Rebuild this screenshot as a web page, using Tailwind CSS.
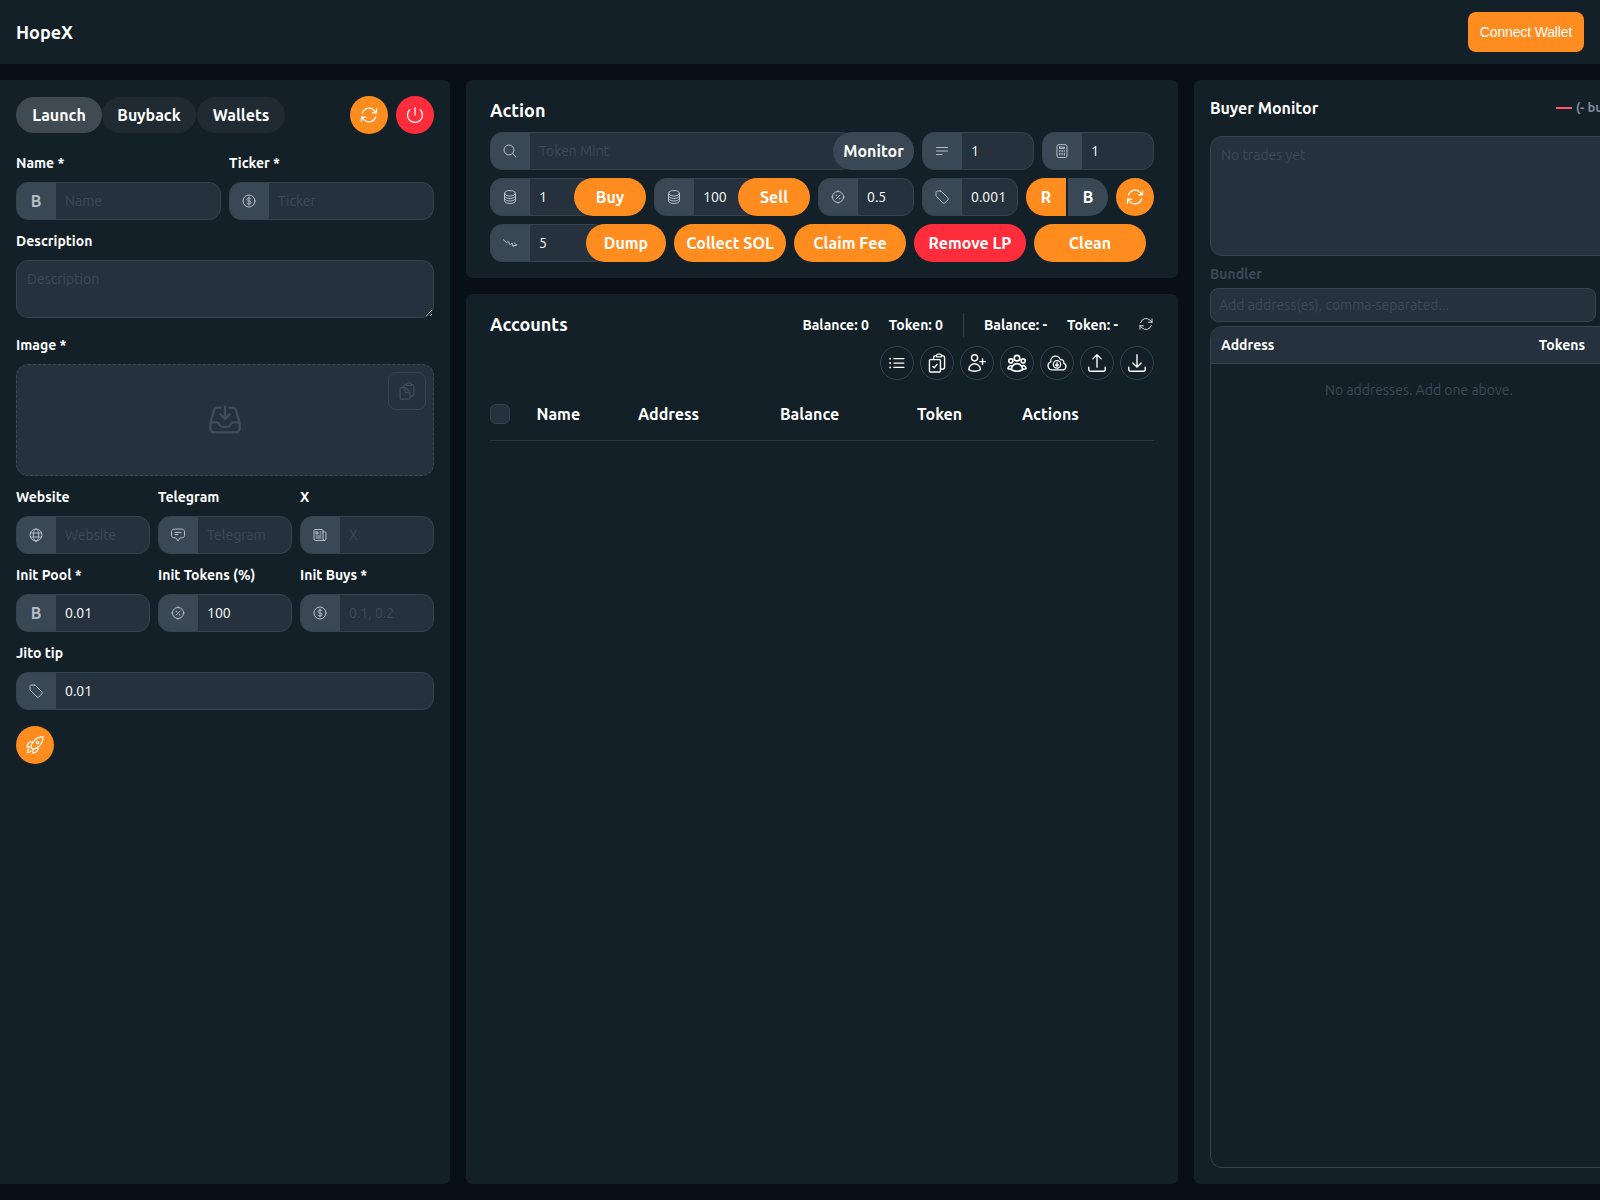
<!DOCTYPE html>
<html lang="en">
<head>
<meta charset="utf-8">
<title>HopeX</title>
<script src="https://cdn.jsdelivr.net/npm/@tailwindcss/browser@4"></script>
</head>
<body class="w-[1600px] h-[1200px] overflow-hidden bg-[#090f16] text-white font-['Ubuntu','Noto_Sans',sans-serif]">
<header class="flex h-16 items-center justify-between bg-[#132028] px-4">
  <div class="text-[18px] font-bold">HopeX</div>
  <button class="h-10 w-[116px] rounded-lg bg-[#ff8c1f] text-[14px] tracking-[-0.15px] text-white font-['Liberation_Sans',sans-serif]">Connect Wallet</button>
</header>
<main class="flex h-[1136px] w-[1644px] gap-4 pt-4 pb-4">
  <!-- LEFT -->
  <section class="flex h-full w-[450px] flex-col rounded-r-md bg-[#132028] px-4 pt-[16px]">
    <div class="flex h-[38px] items-center">
      <button class="h-9 w-[86px] rounded-full bg-[#3f4a52] text-[16px] font-semibold">Launch</button>
      <button class="h-9 w-[94px] rounded-full bg-[#1f2a33] text-[16px] font-semibold">Buyback</button>
      <button class="ml-px h-9 w-[88px] rounded-full bg-[#1f2a33] text-[16px] font-semibold">Wallets</button>
      <button class="ml-auto flex h-[38px] w-[38px] items-center justify-center rounded-full bg-[#ff8c1f]"><svg class="h-5 w-5" viewBox="0 0 24 24" fill="none" stroke="white" stroke-width="1.5"><path stroke-linecap="round" stroke-linejoin="round" d="M16.023 9.348h4.992v-.001M2.985 19.644v-4.992m0 0h4.992m-4.993 0 3.181 3.183a8.25 8.25 0 0 0 13.803-3.7M4.031 9.865a8.25 8.25 0 0 1 13.803-3.7l3.181 3.182m0-4.991v4.99"/></svg></button>
      <button class="ml-2 flex h-[38px] w-[38px] items-center justify-center rounded-full bg-[#ff2d3c]"><svg class="h-5 w-5" viewBox="0 0 24 24" fill="none" stroke="white" stroke-width="1.5"><path stroke-linecap="round" stroke-linejoin="round" d="M5.636 5.636a9 9 0 1 0 12.728 0M12 3v9"/></svg></button>
    </div>
    <div class="mt-[19px] grid grid-cols-2 gap-x-2">
      <div>
        <label class="block text-[14px] leading-5 font-semibold">Name *</label>
        <div class="mt-[9px] flex h-[38px] overflow-hidden rounded-xl border border-[#36434f] bg-[#25323d]">
          <span class="-ml-px flex w-10 shrink-0 items-center justify-center bg-[#3a4856] text-[16px] font-semibold text-[#b5bdc5]">B</span>
          <input class="min-w-0 flex-1 bg-transparent px-[9px] text-[14px] outline-none placeholder:text-[#3d4956]" placeholder="Name">
        </div>
      </div>
      <div>
        <label class="block text-[14px] leading-5 font-semibold">Ticker *</label>
        <div class="mt-[9px] flex h-[38px] overflow-hidden rounded-xl border border-[#36434f] bg-[#25323d]">
          <span class="-ml-px flex w-10 shrink-0 items-center justify-center bg-[#3a4856]"><svg class="h-4 w-4" viewBox="0 0 24 24" fill="none" stroke="#b5bdc5" stroke-width="1.5"><path stroke-linecap="round" stroke-linejoin="round" d="M12 6v12m-3-2.818.879.659c1.171.879 3.07.879 4.242 0 1.172-.879 1.172-2.303 0-3.182C13.536 12.219 12.768 12 12 12c-.725 0-1.45-.22-2.003-.659-1.106-.879-1.106-2.303 0-3.182s2.9-.879 4.006 0l.415.33M21 12a9 9 0 1 1-18 0 9 9 0 0 1 18 0Z"/></svg></span>
          <input class="min-w-0 flex-1 bg-transparent px-[9px] text-[14px] outline-none placeholder:text-[#3d4956]" placeholder="Ticker">
        </div>
      </div>
    </div>
    <label class="mt-[11px] block text-[14px] leading-5 font-semibold">Description</label>
    <textarea class="mt-[9px] block h-[58px] w-full rounded-xl border border-[#36434f] bg-[#25323d] px-[10px] py-[8px] text-[14px] leading-5 outline-none placeholder:text-[#3d4956]" placeholder="Description"></textarea>
    <label class="mt-[17px] block text-[14px] leading-5 font-semibold">Image *</label>
    <div class="relative mt-[9px] flex h-[112px] items-center justify-center rounded-xl border border-dashed border-[#3d4956] bg-[#25323d]">
      <svg class="h-9 w-9" viewBox="0 0 24 24" fill="none" stroke="#3f4c59" stroke-width="1.5"><path stroke-linecap="round" stroke-linejoin="round" d="M9 3.75H6.912a2.25 2.25 0 0 0-2.15 1.588L2.35 13.177a2.25 2.25 0 0 0-.1.661V18a2.25 2.25 0 0 0 2.25 2.25h15A2.25 2.25 0 0 0 21.75 18v-4.162c0-.224-.034-.447-.1-.661L19.24 5.338a2.25 2.25 0 0 0-2.15-1.588H15M2.25 13.5h3.86a2.25 2.25 0 0 1 2.012 1.244l.256.512a2.25 2.25 0 0 0 2.013 1.244h3.218a2.25 2.25 0 0 0 2.013-1.244l.256-.512a2.25 2.25 0 0 1 2.013-1.244h3.859M12 3v8.25m0 0-3-3m3 3 3-3"/></svg>
      <button class="absolute top-[7px] right-[7px] flex h-[38px] w-[38px] items-center justify-center rounded-lg border border-[#36434f]"><svg class="h-5 w-5" viewBox="0 0 24 24" fill="none" stroke="#3f4c59" stroke-width="1.5"><path stroke-linecap="round" stroke-linejoin="round" d="M8.25 7.5V6.108c0-1.135.845-2.098 1.976-2.192.373-.03.748-.057 1.124-.08M15.75 18H18a2.25 2.25 0 0 0 2.25-2.25V6.108c0-1.135-.845-2.098-1.976-2.192a48.424 48.424 0 0 0-1.123-.08M15.75 18.75v-1.875a3.375 3.375 0 0 0-3.375-3.375h-1.5a1.125 1.125 0 0 1-1.125-1.125v-1.5A3.375 3.375 0 0 0 6.375 7.5H5.25m11.9-3.664A2.251 2.251 0 0 0 15 2.25h-1.5a2.251 2.251 0 0 0-2.15 1.586m5.8 0c.065.21.1.433.1.664v.75h-6V4.5c0-.231.035-.454.1-.664M6.75 7.5H4.875c-.621 0-1.125.504-1.125 1.125v12c0 .621.504 1.125 1.125 1.125h9.75c.621 0 1.125-.504 1.125-1.125V16.5a9 9 0 0 0-9-9Z"/></svg></button>
    </div>
    <div class="mt-[11px] grid grid-cols-3 gap-x-2">
      <div>
        <label class="block text-[14px] leading-5 font-semibold">Website</label>
        <div class="mt-[9px] flex h-[38px] overflow-hidden rounded-xl border border-[#36434f] bg-[#25323d]">
          <span class="-ml-px flex w-10 shrink-0 items-center justify-center bg-[#3a4856]"><svg class="h-4 w-4" viewBox="0 0 24 24" fill="none" stroke="#b5bdc5" stroke-width="1.5"><path stroke-linecap="round" stroke-linejoin="round" d="M12 21a9 9 0 1 0 0-18 9 9 0 0 0 0 18Zm0 0c2.5 0 4-4 4-9s-1.5-9-4-9-4 4-4 9 1.5 9 4 9ZM3.6 9h16.8M3.6 15h16.8"/></svg></span>
          <input class="w-full min-w-0 flex-1 bg-transparent px-[9px] text-[14px] outline-none placeholder:text-[#3d4956]" placeholder="Website">
        </div>
      </div>
      <div>
        <label class="block text-[14px] leading-5 font-semibold">Telegram</label>
        <div class="mt-[9px] flex h-[38px] overflow-hidden rounded-xl border border-[#36434f] bg-[#25323d]">
          <span class="-ml-px flex w-10 shrink-0 items-center justify-center bg-[#3a4856]"><svg class="h-4 w-4" viewBox="0 0 24 24" fill="none" stroke="#b5bdc5" stroke-width="1.5"><path stroke-linecap="round" stroke-linejoin="round" d="M7.5 8.25h9m-9 3H12m-9.75 1.51c0 1.6 1.123 2.994 2.707 3.227 1.129.166 2.27.293 3.423.379.35.026.67.21.865.501L12 21l2.755-4.133a1.14 1.14 0 0 1 .865-.501 48.172 48.172 0 0 0 3.423-.379c1.584-.233 2.707-1.627 2.707-3.228V6.741c0-1.602-1.123-2.995-2.707-3.228A48.394 48.394 0 0 0 12 3c-2.392 0-4.744.175-7.043.513C3.373 3.746 2.25 5.14 2.25 6.741v6.018Z"/></svg></span>
          <input class="w-full min-w-0 flex-1 bg-transparent px-[9px] text-[14px] outline-none placeholder:text-[#3d4956]" placeholder="Telegram">
        </div>
      </div>
      <div>
        <label class="block text-[14px] leading-5 font-semibold">X</label>
        <div class="mt-[9px] flex h-[38px] overflow-hidden rounded-xl border border-[#36434f] bg-[#25323d]">
          <span class="-ml-px flex w-10 shrink-0 items-center justify-center bg-[#3a4856]"><svg class="h-4 w-4" viewBox="0 0 24 24" fill="none" stroke="#b5bdc5" stroke-width="1.5"><path stroke-linecap="round" stroke-linejoin="round" d="M12 7.5h1.5m-1.5 3h1.5m-7.5 3h7.5m-7.5 3h7.5m3-9h3.375c.621 0 1.125.504 1.125 1.125V18a2.25 2.25 0 0 1-2.25 2.25M16.5 7.5V18a2.25 2.25 0 0 0 2.25 2.25M16.5 7.5V4.875c0-.621-.504-1.125-1.125-1.125H4.125C3.504 3.75 3 4.254 3 4.875V18a2.25 2.25 0 0 0 2.25 2.25h13.5M6 7.5h3v3H6v-3Z"/></svg></span>
          <input class="w-full min-w-0 flex-1 bg-transparent px-[9px] text-[14px] outline-none placeholder:text-[#3d4956]" placeholder="X">
        </div>
      </div>
    </div>
    <div class="mt-[11px] grid grid-cols-3 gap-x-2">
      <div>
        <label class="block text-[14px] leading-5 font-semibold">Init Pool *</label>
        <div class="mt-[9px] flex h-[38px] overflow-hidden rounded-xl border border-[#36434f] bg-[#25323d]">
          <span class="-ml-px flex w-10 shrink-0 items-center justify-center bg-[#3a4856] text-[16px] font-semibold text-[#b5bdc5]">B</span>
          <input class="w-full min-w-0 flex-1 bg-transparent px-[9px] text-[14px] outline-none" value="0.01">
        </div>
      </div>
      <div>
        <label class="block text-[14px] leading-5 font-semibold">Init Tokens (%)</label>
        <div class="mt-[9px] flex h-[38px] overflow-hidden rounded-xl border border-[#36434f] bg-[#25323d]">
          <span class="-ml-px flex w-10 shrink-0 items-center justify-center bg-[#3a4856]"><svg class="h-4 w-4" viewBox="0 0 24 24" fill="none" stroke="#b5bdc5" stroke-width="1.5"><path stroke-linecap="round" d="M12 2.5v1.5M12 20v1.5M2.5 12H4M20 12h1.5M9 15l6-6"/><circle cx="12" cy="12" r="8.25"/><circle cx="9.5" cy="9.5" r=".6"/><circle cx="14.5" cy="14.5" r=".6"/></svg></span>
          <input class="w-full min-w-0 flex-1 bg-transparent px-[9px] text-[14px] outline-none" value="100">
        </div>
      </div>
      <div>
        <label class="block text-[14px] leading-5 font-semibold">Init Buys *</label>
        <div class="mt-[9px] flex h-[38px] overflow-hidden rounded-xl border border-[#36434f] bg-[#25323d]">
          <span class="-ml-px flex w-10 shrink-0 items-center justify-center bg-[#3a4856]"><svg class="h-4 w-4" viewBox="0 0 24 24" fill="none" stroke="#b5bdc5" stroke-width="1.5"><path stroke-linecap="round" stroke-linejoin="round" d="M12 6v12m-3-2.818.879.659c1.171.879 3.07.879 4.242 0 1.172-.879 1.172-2.303 0-3.182C13.536 12.219 12.768 12 12 12c-.725 0-1.45-.22-2.003-.659-1.106-.879-1.106-2.303 0-3.182s2.9-.879 4.006 0l.415.33M21 12a9 9 0 1 1-18 0 9 9 0 0 1 18 0Z"/></svg></span>
          <input class="w-full min-w-0 flex-1 bg-transparent px-[9px] text-[14px] outline-none placeholder:text-[#3d4956]" placeholder="0.1, 0.2">
        </div>
      </div>
    </div>
    <label class="mt-[11px] block text-[14px] leading-5 font-semibold">Jito tip</label>
    <div class="mt-[9px] flex h-[38px] overflow-hidden rounded-xl border border-[#36434f] bg-[#25323d]">
      <span class="-ml-px flex w-10 shrink-0 items-center justify-center bg-[#3a4856]"><svg class="h-4 w-4" viewBox="0 0 24 24" fill="none" stroke="#b5bdc5" stroke-width="1.5"><path stroke-linecap="round" stroke-linejoin="round" d="M9.568 3H5.25A2.25 2.25 0 0 0 3 5.25v4.318c0 .597.237 1.17.659 1.591l9.581 9.581c.699.699 1.78.872 2.607.33a18.095 18.095 0 0 0 5.223-5.223c.542-.827.369-1.908-.33-2.607L11.16 3.66A2.25 2.25 0 0 0 9.568 3Z"/></svg></span>
      <input class="w-full min-w-0 flex-1 bg-transparent px-[9px] text-[14px] outline-none" value="0.01">
    </div>
    <button class="mt-4 flex h-[38px] w-[38px] items-center justify-center rounded-full bg-[#ff8c1f]"><svg class="h-5 w-5" viewBox="0 0 24 24" fill="none" stroke="white" stroke-width="1.5"><path stroke-linecap="round" stroke-linejoin="round" d="M15.59 14.37a6 6 0 0 1-5.84 7.38v-4.8m5.84-2.58a14.98 14.98 0 0 0 6.16-12.12A14.98 14.98 0 0 0 9.631 8.41m5.96 5.96a14.926 14.926 0 0 1-5.841 2.58m-.119-8.54a6 6 0 0 0-7.381 5.84h4.8m2.581-5.84a14.927 14.927 0 0 0-2.58 5.84m2.699 2.7c-.103.021-.207.041-.311.06a15.09 15.09 0 0 1-2.448-2.448 14.9 14.9 0 0 1 .06-.312m-2.24 2.39a4.493 4.493 0 0 0-1.757 4.306 4.493 4.493 0 0 0 4.306-1.758M16.5 9a1.5 1.5 0 1 1-3 0 1.5 1.5 0 0 1 3 0Z"/></svg></button>
  </section>

  <!-- CENTER -->
  <div class="flex h-full w-[712px] flex-col gap-4">
    <section class="flex h-[198px] flex-col rounded-md bg-[#132028] px-6 pt-4">
      <h2 class="text-[18px] leading-7 font-semibold">Action</h2>
      <div class="mt-2 flex h-[38px] gap-2">
        <div class="flex w-[424px]">
          <div class="-mr-5 flex min-w-0 flex-1 overflow-hidden rounded-xl border border-[#36434f] bg-[#25323d]">
            <span class="-ml-px flex w-10 shrink-0 items-center justify-center bg-[#3a4856]"><svg class="h-4 w-4" viewBox="0 0 24 24" fill="none" stroke="#b5bdc5" stroke-width="1.5"><path stroke-linecap="round" stroke-linejoin="round" d="m21 21-5.197-5.197m0 0A7.5 7.5 0 1 0 5.196 5.196a7.5 7.5 0 0 0 10.607 10.607Z"/></svg></span>
            <input class="w-full min-w-0 flex-1 bg-transparent px-[9px] text-[14px] outline-none placeholder:text-[#3d4956]" placeholder="Token Mint">
          </div>
          <button class="relative w-[81px] rounded-full bg-[#3a4856] text-[16px] font-semibold">Monitor</button>
        </div>
        <div class="flex w-[112px] overflow-hidden rounded-xl border border-[#36434f] bg-[#25323d]">
          <span class="-ml-px flex w-10 shrink-0 items-center justify-center bg-[#3a4856]"><svg class="h-4 w-4" viewBox="0 0 24 24" fill="none" stroke="#b5bdc5" stroke-width="1.5"><path stroke-linecap="round" stroke-linejoin="round" d="M3.75 6.75h16.5M3.75 12h16.5m-16.5 5.25H12"/></svg></span>
          <input class="w-full min-w-0 flex-1 bg-transparent px-[9px] text-[14px] outline-none" value="1">
        </div>
        <div class="flex w-[112px] overflow-hidden rounded-xl border border-[#36434f] bg-[#25323d]">
          <span class="-ml-px flex w-10 shrink-0 items-center justify-center bg-[#3a4856]"><svg class="h-4 w-4" viewBox="0 0 24 24" fill="none" stroke="#b5bdc5" stroke-width="1.5"><path stroke-linecap="round" stroke-linejoin="round" d="M15.75 15.75V18m-7.5-6.75h.008v.008H8.25v-.008Zm0 2.25h.008v.008H8.25V13.5Zm0 2.25h.008v.008H8.25v-.008Zm0 2.25h.008v.008H8.25V18Zm2.498-6.75h.007v.008h-.007v-.008Zm0 2.25h.007v.008h-.007V13.5Zm0 2.25h.007v.008h-.007v-.008Zm0 2.25h.007v.008h-.007V18Zm2.504-6.75h.008v.008h-.008v-.008Zm0 2.25h.008v.008h-.008V13.5Zm0 2.25h.008v.008h-.008v-.008Zm0 2.25h.008v.008h-.008V18Zm2.498-6.75h.008v.008h-.008v-.008Zm0 2.25h.008v.008h-.008V13.5ZM8.25 6h7.5v2.25h-7.5V6ZM12 2.25c-1.892 0-3.758.11-5.593.322C5.307 2.7 4.5 3.65 4.5 4.757V19.5a2.25 2.25 0 0 0 2.25 2.25h10.5a2.25 2.25 0 0 0 2.25-2.25V4.757c0-1.108-.806-2.057-1.907-2.185A48.507 48.507 0 0 0 12 2.25Z"/></svg></span>
          <input class="w-full min-w-0 flex-1 bg-transparent px-[9px] text-[14px] outline-none" value="1">
        </div>
      </div>
      <div class="mt-2 flex h-[38px] gap-2">
        <div class="flex w-[156px]">
          <div class="-mr-5 flex min-w-0 flex-1 overflow-hidden rounded-xl border border-[#36434f] bg-[#25323d]">
            <span class="-ml-px flex w-10 shrink-0 items-center justify-center bg-[#3a4856]"><svg class="h-4 w-4" viewBox="0 0 24 24" fill="none" stroke="#b5bdc5" stroke-width="1.5"><path stroke-linecap="round" stroke-linejoin="round" d="M20.25 6.375c0 2.278-3.694 4.125-8.25 4.125S3.75 8.653 3.75 6.375m16.5 0c0-2.278-3.694-4.125-8.25-4.125S3.75 4.097 3.75 6.375m16.5 0v11.25c0 2.278-3.694 4.125-8.25 4.125s-8.25-1.847-8.25-4.125V6.375m16.5 0v3.75m-16.5-3.75v3.75m16.5 0v3.75C20.25 16.153 16.556 18 12 18s-8.25-1.847-8.25-4.125v-3.75m16.5 0c0 2.278-3.694 4.125-8.25 4.125s-8.25-1.847-8.25-4.125"/></svg></span>
            <input class="w-full min-w-0 flex-1 bg-transparent px-[9px] text-[14px] outline-none" value="1">
          </div>
          <button class="relative w-[72px] shrink-0 rounded-full bg-[#ff8c1f] text-[16px] font-semibold">Buy</button>
        </div>
        <div class="flex w-[156px]">
          <div class="-mr-5 flex min-w-0 flex-1 overflow-hidden rounded-xl border border-[#36434f] bg-[#25323d]">
            <span class="-ml-px flex w-10 shrink-0 items-center justify-center bg-[#3a4856]"><svg class="h-4 w-4" viewBox="0 0 24 24" fill="none" stroke="#b5bdc5" stroke-width="1.5"><path stroke-linecap="round" stroke-linejoin="round" d="M20.25 6.375c0 2.278-3.694 4.125-8.25 4.125S3.75 8.653 3.75 6.375m16.5 0c0-2.278-3.694-4.125-8.25-4.125S3.75 4.097 3.75 6.375m16.5 0v11.25c0 2.278-3.694 4.125-8.25 4.125s-8.25-1.847-8.25-4.125V6.375m16.5 0v3.75m-16.5-3.75v3.75m16.5 0v3.75C20.25 16.153 16.556 18 12 18s-8.25-1.847-8.25-4.125v-3.75m16.5 0c0 2.278-3.694 4.125-8.25 4.125s-8.25-1.847-8.25-4.125"/></svg></span>
            <input class="w-full min-w-0 flex-1 bg-transparent px-[9px] text-[14px] outline-none" value="100">
          </div>
          <button class="relative w-[72px] shrink-0 rounded-full bg-[#ff8c1f] text-[16px] font-semibold">Sell</button>
        </div>
        <div class="flex w-[96px] overflow-hidden rounded-xl border border-[#36434f] bg-[#25323d]">
          <span class="-ml-px flex w-10 shrink-0 items-center justify-center bg-[#3a4856]"><svg class="h-4 w-4" viewBox="0 0 24 24" fill="none" stroke="#b5bdc5" stroke-width="1.5"><path stroke-linecap="round" d="M12 2.5v1.5M12 20v1.5M2.5 12H4M20 12h1.5M9 15l6-6"/><circle cx="12" cy="12" r="8.25"/><circle cx="9.5" cy="9.5" r=".6"/><circle cx="14.5" cy="14.5" r=".6"/></svg></span>
          <input class="w-full min-w-0 flex-1 bg-transparent px-[9px] text-[14px] outline-none" value="0.5">
        </div>
        <div class="flex w-[96px] overflow-hidden rounded-xl border border-[#36434f] bg-[#25323d]">
          <span class="-ml-px flex w-10 shrink-0 items-center justify-center bg-[#3a4856]"><svg class="h-4 w-4" viewBox="0 0 24 24" fill="none" stroke="#b5bdc5" stroke-width="1.5"><path stroke-linecap="round" stroke-linejoin="round" d="M9.568 3H5.25A2.25 2.25 0 0 0 3 5.25v4.318c0 .597.237 1.17.659 1.591l9.581 9.581c.699.699 1.78.872 2.607.33a18.095 18.095 0 0 0 5.223-5.223c.542-.827.369-1.908-.33-2.607L11.16 3.66A2.25 2.25 0 0 0 9.568 3Z"/></svg></span>
          <input class="w-full min-w-0 flex-1 bg-transparent px-[9px] text-[14px] outline-none" value="0.001">
        </div>
        <div class="flex gap-[2px]">
          <button class="w-10 rounded-l-full bg-[#ff8c1f] text-[16px] font-bold">R</button>
          <button class="w-10 rounded-r-full bg-[#3a4856] text-[16px] font-bold">B</button>
        </div>
        <button class="flex w-[38px] items-center justify-center rounded-full bg-[#ff8c1f]"><svg class="h-5 w-5" viewBox="0 0 24 24" fill="none" stroke="white" stroke-width="1.5"><path stroke-linecap="round" stroke-linejoin="round" d="M16.023 9.348h4.992v-.001M2.985 19.644v-4.992m0 0h4.992m-4.993 0 3.181 3.183a8.25 8.25 0 0 0 13.803-3.7M4.031 9.865a8.25 8.25 0 0 1 13.803-3.7l3.181 3.182m0-4.991v4.99"/></svg></button>
      </div>
      <div class="mt-2 flex h-[38px] gap-2">
        <div class="flex w-[176px]">
          <div class="-mr-5 flex min-w-0 flex-1 overflow-hidden rounded-xl border border-[#36434f] bg-[#25323d]">
            <span class="-ml-px flex w-10 shrink-0 items-center justify-center bg-[#3a4856]"><svg class="h-4 w-4" viewBox="0 0 24 24" fill="none" stroke="#b5bdc5" stroke-width="1.5"><path stroke-linecap="round" stroke-linejoin="round" d="M2 7l5 4.5 2-2 3.5 5.5 2.5-3 1.5 5 5-2m0 0-3-3.5m3 3.5-4 1"/></svg></span>
            <input class="w-full min-w-0 flex-1 bg-transparent px-[9px] text-[14px] outline-none" value="5">
          </div>
          <button class="relative w-[80px] shrink-0 rounded-full bg-[#ff8c1f] text-[16px] font-semibold">Dump</button>
        </div>
        <button class="w-[112px] rounded-full bg-[#ff8c1f] text-[16px] font-semibold">Collect SOL</button>
        <button class="w-[112px] rounded-full bg-[#ff8c1f] text-[16px] font-semibold">Claim Fee</button>
        <button class="w-[112px] rounded-full bg-[#ff2d3c] text-[16px] font-semibold">Remove LP</button>
        <button class="w-[112px] rounded-full bg-[#ff8c1f] text-[16px] font-semibold">Clean</button>
      </div>
    </section>
    <section class="min-h-0 flex-1 rounded-md bg-[#132028] px-6">
      <div class="flex h-[52px] items-start justify-between pt-[16px]">
        <h2 class="text-[18px] leading-7 font-semibold">Accounts</h2>
        <div class="mt-[3px] flex h-6 items-center text-[14px] font-semibold">
          <span>Balance: 0</span>
          <span class="ml-5">Token: 0</span>
          <span class="mx-5 h-6 w-px bg-[#36434f]"></span>
          <span>Balance: -</span>
          <span class="ml-5">Token: -</span>
          <svg class="ml-5 h-4 w-4 -translate-y-[1px]" viewBox="0 0 24 24" fill="none" stroke="#d5d9dd" stroke-width="1.5"><path stroke-linecap="round" stroke-linejoin="round" d="M16.023 9.348h4.992v-.001M2.985 19.644v-4.992m0 0h4.992m-4.993 0 3.181 3.183a8.25 8.25 0 0 0 13.803-3.7M4.031 9.865a8.25 8.25 0 0 1 13.803-3.7l3.181 3.182m0-4.991v4.99"/></svg>
        </div>
      </div>
      <div class="flex justify-end gap-[6px]">
        <button class="flex h-[34px] w-[34px] items-center justify-center rounded-full border border-[#36434f]"><svg class="h-5 w-5" viewBox="0 0 24 24" fill="none" stroke="white" stroke-width="1.5"><path stroke-linecap="round" stroke-linejoin="round" d="M8.25 6.75h12M8.25 12h12m-12 5.25h12M3.75 6.75h.007v.008H3.75V6.75Zm.375 0a.375.375 0 1 1-.75 0 .375.375 0 0 1 .75 0ZM3.75 12h.007v.008H3.75V12Zm.375 0a.375.375 0 1 1-.75 0 .375.375 0 0 1 .75 0Zm-.375 5.25h.007v.008H3.75v-.008Zm.375 0a.375.375 0 1 1-.75 0 .375.375 0 0 1 .75 0Z"/></svg></button>
        <button class="flex h-[34px] w-[34px] items-center justify-center rounded-full border border-[#36434f]"><svg class="h-[22px] w-[22px]" viewBox="0 0 24 24" fill="none" stroke="white" stroke-width="1.5"><path stroke-linecap="round" stroke-linejoin="round" d="M11.35 3.836c-.065.21-.1.433-.1.664 0 .414.336.75.75.75h4.5a.75.75 0 0 0 .75-.75 2.25 2.25 0 0 0-.1-.664m-5.8 0A2.251 2.251 0 0 1 13.5 2.25H15c1.012 0 1.867.668 2.15 1.586m-5.8 0c-.376.023-.75.05-1.124.08C9.095 4.01 8.25 4.973 8.25 6.108V8.25m8.9-4.414c.376.023.75.05 1.124.08 1.131.094 1.976 1.057 1.976 2.192V16.5A2.25 2.25 0 0 1 18 18.75h-2.25m-7.5-10.5H4.875c-.621 0-1.125.504-1.125 1.125v11.25c0 .621.504 1.125 1.125 1.125h9.75c.621 0 1.125-.504 1.125-1.125V18.75m-7.5-10.5h6.375c.621 0 1.125.504 1.125 1.125v9.375m-8.25-3 1.5 1.5 3-3.75"/></svg></button>
        <button class="flex h-[34px] w-[34px] items-center justify-center rounded-full border border-[#36434f]"><svg class="h-[22px] w-[22px]" viewBox="0 0 24 24" fill="none" stroke="white" stroke-width="1.5"><path stroke-linecap="round" stroke-linejoin="round" d="M18 7.5v3m0 0v3m0-3h3m-3 0h-3m-2.25-4.125a3.375 3.375 0 1 1-6.75 0 3.375 3.375 0 0 1 6.75 0ZM3 19.235v-.11a6.375 6.375 0 0 1 12.75 0v.109A12.318 12.318 0 0 1 9.374 21c-2.331 0-4.512-.645-6.374-1.766Z"/></svg></button>
        <button class="flex h-[34px] w-[34px] items-center justify-center rounded-full border border-[#36434f]"><svg class="h-[22px] w-[22px]" viewBox="0 0 24 24" fill="none" stroke="white" stroke-width="1.8"><path stroke-linecap="round" stroke-linejoin="round" d="M18 18.72a9.094 9.094 0 0 0 3.741-.479 3 3 0 0 0-4.682-2.72m.94 3.198.001.031c0 .225-.012.447-.037.666A11.944 11.944 0 0 1 12 21c-2.17 0-4.207-.576-5.963-1.584A6.062 6.062 0 0 1 6 18.719m12 0a5.971 5.971 0 0 0-.941-3.197m0 0A5.995 5.995 0 0 0 12 12.75a5.995 5.995 0 0 0-5.058 2.772m0 0a3 3 0 0 0-4.681 2.72 8.986 8.986 0 0 0 3.74.477m.94-3.197a5.971 5.971 0 0 0-.94 3.197M15 6.75a3 3 0 1 1-6 0 3 3 0 0 1 6 0Zm6 3a2.25 2.25 0 1 1-4.5 0 2.25 2.25 0 0 1 4.5 0Zm-13.5 0a2.25 2.25 0 1 1-4.5 0 2.25 2.25 0 0 1 4.5 0Z"/></svg></button>
        <button class="flex h-[34px] w-[34px] items-center justify-center rounded-full border border-[#36434f]"><svg class="h-[22px] w-[22px]" viewBox="0 0 24 24" fill="none" stroke="white" stroke-width="1.4"><path stroke-linecap="round" stroke-linejoin="round" d="M12 11.5v4m0 0-1.6-1.6m1.6 1.6 1.6-1.6M6.75 19.5a4.5 4.5 0 0 1-1.41-8.775 5.25 5.25 0 0 1 10.233-2.33 3 3 0 0 1 3.758 3.848A3.752 3.752 0 0 1 18 19.5H6.75Z"/><circle cx="12" cy="13.5" r="4"/></svg></button>
        <button class="flex h-[34px] w-[34px] items-center justify-center rounded-full border border-[#36434f]"><svg class="h-[22px] w-[22px]" viewBox="0 0 24 24" fill="none" stroke="white" stroke-width="1.5"><path stroke-linecap="round" stroke-linejoin="round" d="M3 16.5v2.25A2.25 2.25 0 0 0 5.25 21h13.5A2.25 2.25 0 0 0 21 18.75V16.5m-13.5-9L12 3m0 0 4.5 4.5M12 3v13.5"/></svg></button>
        <button class="flex h-[34px] w-[34px] items-center justify-center rounded-full border border-[#36434f]"><svg class="h-[22px] w-[22px]" viewBox="0 0 24 24" fill="none" stroke="white" stroke-width="1.5"><path stroke-linecap="round" stroke-linejoin="round" d="M3 16.5v2.25A2.25 2.25 0 0 0 5.25 21h13.5A2.25 2.25 0 0 0 21 18.75V16.5M16.5 12 12 16.5m0 0L7.5 12m4.5 4.5V3"/></svg></button>
      </div>
      <div class="mt-[9px] flex h-[52px] items-center border-b border-[#2a3641] pb-[2px] text-[16px] font-semibold">
        <span class="w-[46.5px] shrink-0"><span class="block h-5 w-5 rounded-md border border-[#36434f] bg-[#25323d]"></span></span>
        <span class="w-[101.5px] shrink-0">Name</span>
        <span class="w-[142px] shrink-0">Address</span>
        <span class="w-[137px] shrink-0">Balance</span>
        <span class="w-[105px] shrink-0">Token</span>
        <span>Actions</span>
      </div>
    </section>
  </div>

  <!-- RIGHT -->
  <section class="flex h-full w-[450px] shrink-0 flex-col rounded-md bg-[#132028] p-4">
    <div class="flex h-10 items-start justify-between">
      <h2 class="text-[16px] leading-[24px] font-semibold">Buyer Monitor</h2>
      <div class="mr-2 flex h-6 items-center gap-1 text-[13px] font-semibold text-[#7f8a95]"><span class="h-[2px] w-4 bg-[#ff5a66]"></span><span class="whitespace-nowrap">(- buys)</span></div>
    </div>
    <div class="h-[120px] shrink-0 rounded-xl border border-[#36434f] bg-[#25323d] px-[10px] py-2 text-[14px] leading-5 text-[#3d4956]">No trades yet</div>
    <label class="mt-[8px] block text-[14px] leading-5 font-semibold text-[#3d4956]">Bundler</label>
    <div class="mt-[4px] flex shrink-0 gap-2">
      <input class="h-[34px] w-[386px] rounded-lg border border-[#36434f] bg-[#25323d] px-2 text-[14px] outline-none placeholder:text-[#3d4956]" placeholder="Add address(es), comma-separated...">
      <span class="w-6"></span>
    </div>
    <div class="mt-[4px] min-h-0 flex-1 overflow-hidden rounded-xl border border-[#36434f]">
      <div class="flex h-[37px] items-center justify-between border-b border-[#36434f] bg-[#25323d] px-[10px] text-[14px] font-semibold"><span>Address</span><span class="mr-[32px]">Tokens</span></div>
      <div class="pt-4 text-center text-[14px] leading-5 text-[#3d4956]">No addresses. Add one above.</div>
    </div>
  </section>
</main>
</body>
</html>
